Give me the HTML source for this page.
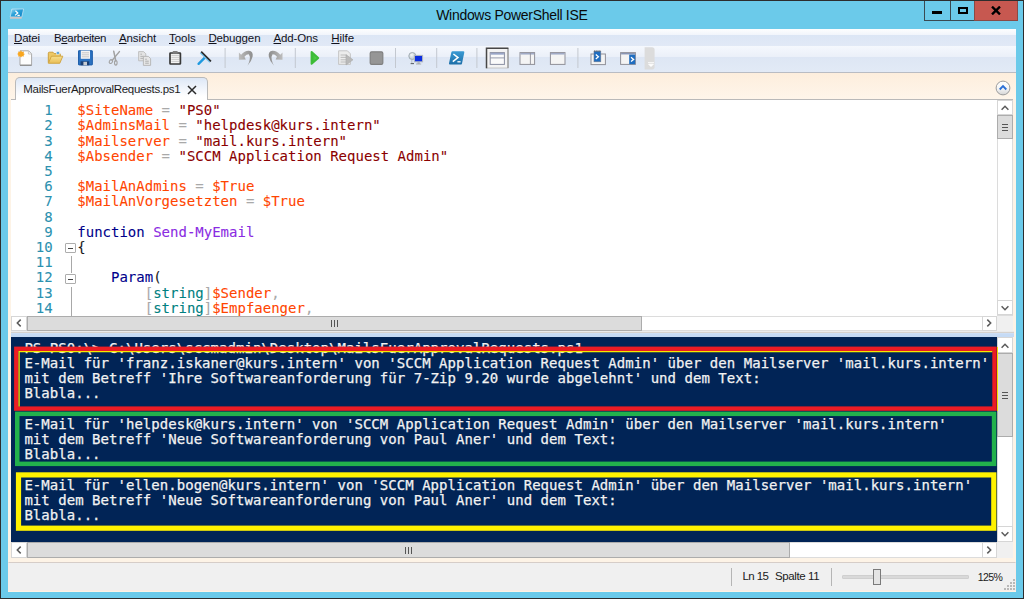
<!DOCTYPE html>
<html lang="de">
<head>
<meta charset="utf-8">
<title>Windows PowerShell ISE</title>
<style>
*{box-sizing:border-box;margin:0;padding:0}
html,body{width:1024px;height:599px;overflow:hidden;background:#6bcaea}
body{position:relative;font-family:"Liberation Sans",sans-serif;font-size:12px;color:#1a1a1a}
.abs{position:absolute}
#frame{left:0;top:0;width:1024px;height:599px;background:#6bcaea;border-top:1px solid #2d2d2d;border-left:1px solid #2d2d2d;border-bottom:1px solid #2d2d2d;border-right:1px solid #2d2d2d}
#title{left:436.2px;top:5px;white-space:nowrap;font-size:14px;line-height:20px;color:#0a0a0a;letter-spacing:-0.3px}
#client{left:7.5px;top:28.5px;width:1008.8px;height:563px;background:#fdf3e6}
/* caption buttons */
.cap{top:1px;height:20px;border:1px solid #3a4a52;border-top:none}
#bmin{left:924px;width:27px;background:#6bcaea}
#bmax{left:950px;width:25px;background:#6bcaea}
#bclose{left:974px;width:44px;background:#c75850;border-color:#8a4a45}
/* menu */
#menubar{left:7.5px;top:28px;width:1008.8px;height:18px;background:linear-gradient(#6bcaea 0,#6bcaea 0.5px,#bfd5e4 0.5px,#eef3f9 1.2px,#fcfdfe 1.4px,#f0f4fb 7.5px,#dce6f5 7.5px,#e1e9f6 18px)}
#toolbar{left:7.5px;top:45.5px;width:1008.8px;height:27.2px;background:linear-gradient(#f5f8fd 0,#ebf0f9 10.5px,#dde6f4 10.5px,#e2eaf6 26.1px,#b9bcc3 26.1px,#b9bcc3 27.2px)}
.mi{top:30.6px;font-size:11.5px;line-height:14px;color:#12121c;white-space:nowrap}
.mi u{text-decoration:underline;text-underline-offset:1px}
.sep{top:48px;width:1px;height:20px;background:#c2c7cf}
/* tabs */
#tabstrip{left:7.5px;top:72.7px;width:1008.8px;height:26.3px;background:linear-gradient(#fdeedd,#fef5ea)}
#tab{left:14.6px;top:77.3px;width:193.6px;height:22.7px;background:linear-gradient(#dde7f6 0,#eef3fb 40%,#fff 85%);border:1px solid #b9b9b9;border-bottom:none;border-radius:5px 5px 0 0}
#tabtxt{left:23.3px;top:82.1px;font-size:11.5px;line-height:14px;letter-spacing:-0.317px;white-space:nowrap;color:#1c1c1c}
/* editor */
#editor{left:11px;top:99px;width:1002px;height:233px;background:#fff;border-top:1px solid #b9b9b9;overflow:hidden}
.mono{font-family:"DejaVu Sans Mono","Liberation Mono",monospace;font-size:14px;white-space:pre;letter-spacing:0}
.ln{position:absolute;left:0;height:16px;line-height:16px;-webkit-text-stroke:0.09px}
.num{position:absolute;left:0;width:41.6px;text-align:right;color:#2b91af}
.code{position:absolute;left:66.3px}
.v{color:#ff4500}.o{color:#a9a9a9}.s{color:#8b0000}.k{color:#00008b}.c{color:#8a2be2}.t{color:#008080}
/* scrollbars */
.sb{background:#fff;border:1px solid #dcdcdc}
.sbtn{background:#fff;border:1px solid #d6d6d6}
.thumb{background:#dcdcdc;border:1px solid #acacac}
/* console */
#console{left:11px;top:337px;width:986px;height:204.5px;background:#012456;overflow:hidden;color:#f2f2f2}
.cl{position:absolute;left:13.4px;height:16px;line-height:16px;letter-spacing:0.034px;-webkit-text-stroke:0.25px #f2f2f2}
.box{position:absolute}
/* status */
#status{left:7.5px;top:561.6px;width:1008.8px;height:29.9px;background:#f0f0f0;border-top:1px solid #d6cdc8;border-left:1px solid #f8ece6;border-right:1px solid #f8ece6;border-bottom:1px solid #f8ece6}
.st{font-size:11.5px;line-height:14px;white-space:nowrap;color:#1a1a1a}
</style>
</head>
<body>
<div id="frame" class="abs"></div>
<div id="title" class="abs">Windows PowerShell ISE</div>

<!-- app icon -->
<svg class="abs" style="left:8px;top:7px" width="18" height="14" viewBox="8 7 18 14">
  <defs><linearGradient id="gapp" x1="0" y1="0" x2="1" y2="1"><stop offset="0" stop-color="#9ddcf4"/><stop offset="0.45" stop-color="#2ba0d8"/><stop offset="1" stop-color="#0b7fc2"/></linearGradient></defs>
  <polygon points="11.8,9 23.6,9 21.8,16.9 10.2,16.9" fill="url(#gapp)" stroke="#cfe9f6" stroke-width="0.7"/>
  <polygon points="10.1,17 21.8,17 21.6,18.7 9.9,18.7" fill="#cdc6c6"/>
  <path d="M15.4 10.8 L17.8 13 L15 15.4 M17.4 15.4 H19.8" stroke="#fff" stroke-width="1.2" fill="none"/>
</svg>

<!-- caption buttons -->
<div id="bmin" class="abs cap"></div>
<div id="bmax" class="abs cap"></div>
<div id="bclose" class="abs cap"></div>
<div class="abs" style="left:932px;top:11px;width:10px;height:3px;background:#000"></div>
<div class="abs" style="left:958px;top:7px;width:10px;height:7px;border:2px solid #000"></div>
<svg class="abs" style="left:991px;top:6px" width="10" height="9" viewBox="0 0 10 9"><path d="M1 0.6 L9 8.4 M9 0.6 L1 8.4" stroke="#000" stroke-width="2.3"/></svg>

<div id="client" class="abs"></div>
<div id="menubar" class="abs"></div>
<div id="toolbar" class="abs"></div>

<div class="abs mi" style="left:14px;letter-spacing:-0.19px"><u>D</u>atei</div>
<div class="abs mi" style="left:54px;letter-spacing:-0.36px">B<u>e</u>arbeiten</div>
<div class="abs mi" style="left:119px;letter-spacing:-0.1px"><u>A</u>nsicht</div>
<div class="abs mi" style="left:169px;letter-spacing:-0.05px"><u>T</u>ools</div>
<div class="abs mi" style="left:208.4px;letter-spacing:-0.135px"><u>D</u>ebuggen</div>
<div class="abs mi" style="left:273.5px;letter-spacing:-0.127px"><u>A</u>dd-Ons</div>
<div class="abs mi" style="left:331.3px;letter-spacing:-0.063px"><u>H</u>ilfe</div>

<!-- toolbar icons -->
<svg class="abs" style="left:7px;top:46px" width="1009" height="26" viewBox="7 46 1009 26">
<defs>
 <linearGradient id="gfold" x1="0" y1="0" x2="0" y2="1"><stop offset="0" stop-color="#f7e08f"/><stop offset="1" stop-color="#e9bd55"/></linearGradient>
 <linearGradient id="gps" x1="0" y1="0" x2="0" y2="1"><stop offset="0" stop-color="#3a9bd4"/><stop offset="1" stop-color="#1d6ea8"/></linearGradient>
 <linearGradient id="ggreen" x1="0" y1="0" x2="1" y2="0"><stop offset="0" stop-color="#36b832"/><stop offset="1" stop-color="#5ed657"/></linearGradient>
</defs>
<!-- new -->
<path d="M20 50.8 H28.6 L31.6 53.8 V65.2 H20 Z" fill="#fdfdfd" stroke="#a9a9a9" stroke-width="1"/>
<path d="M20 65.3 H31.6" stroke="#8d8d8d" stroke-width="1.2"/>
<path d="M28.4 50.8 V54 H31.6" fill="none" stroke="#c4c4c4" stroke-width="0.9"/>
<path d="M21 50.2 L22 52 L24 51.6 L23.6 53.6 L25 54 L23.6 55 L24 56.6 L22 56.2 L21 57.4 L20 56.2 L18 56.6 L18.4 55 L17.2 54 L18.4 53 L18 51.6 L20 52 Z" fill="#f9a61e"/>
<!-- open -->
<path d="M48.3 62.8 V53.2 Q48.3 52.2 49.3 52.2 H53 L54.2 53.6 H59.5 Q60.4 53.6 60.4 54.6 V56" fill="#edc865" stroke="#c99a33" stroke-width="0.9"/>
<rect x="56.3" y="51.6" width="3" height="2.6" fill="#5fa3d8" stroke="#e9f2fa" stroke-width="0.6"/>
<path d="M48.4 63.3 L51.4 56.2 H62.8 L59.8 63.3 Z" fill="url(#gfold)" stroke="#cfa23c" stroke-width="0.9" stroke-linejoin="round"/>
<!-- save -->
<rect x="78" y="50.3" width="14.8" height="15" rx="1" fill="#2b72c2"/>
<rect x="78.5" y="50.8" width="13.8" height="14" rx="0.8" fill="none" stroke="#1e5aa3" stroke-width="0.8"/>
<rect x="80.8" y="50.6" width="9.2" height="8.2" fill="#f4f4f4"/>
<path d="M81.8 52.8 H89 M81.8 54.8 H89 M81.8 56.8 H89" stroke="#bdbdbd" stroke-width="0.8"/>
<rect x="80.6" y="61.3" width="8.6" height="4" fill="#1b3f74"/>
<rect x="83.4" y="61.8" width="3.6" height="3.5" fill="#c8ccd2"/>
<!-- cut (disabled) -->
<g fill="none" stroke="#a2a2a2" stroke-linecap="round">
 <path d="M113.7 51.2 L115.8 61" stroke-width="1.5"/>
 <path d="M119.4 51.6 L112.2 60.4" stroke-width="1.5"/>
 <ellipse cx="110.9" cy="61.6" rx="1.5" ry="2" stroke-width="1.1" transform="rotate(35 110.9 61.6)"/>
 <ellipse cx="115.8" cy="62.8" rx="1.3" ry="2.3" stroke-width="1.1"/>
</g>
<!-- copy (disabled) -->
<path d="M138.6 51.6 H143.6 L145.8 53.8 V60.8 H138.6 Z" fill="#e3e3e3" stroke="#bcbcbc" stroke-width="0.9"/>
<path d="M140.4 54.2 H142 M140.4 56.4 H143.8 M140.4 58.4 H143.8" stroke="#a8a8a8" stroke-width="0.8"/>
<path d="M143.4 56.4 H148.4 L150.6 58.6 V65.4 H143.4 Z" fill="#e6e6e6" stroke="#b4b4b4" stroke-width="0.9"/>
<path d="M145.2 59.2 H146.8 M145.2 61.2 H148.8 M145.2 63.2 H148.8" stroke="#a0a0a0" stroke-width="0.8"/>
<!-- paste -->
<rect x="170" y="53" width="10.4" height="11" rx="0.5" fill="#f4f4f4" stroke="#383838" stroke-width="1.7"/>
<path d="M171.4 55.4 H179 M171.4 57.4 H179 M171.4 59.4 H179 M171.4 61.4 H179" stroke="#c6c6c6" stroke-width="0.9"/>
<rect x="172.8" y="50.9" width="4.8" height="2.8" rx="0.6" fill="#7e7e7e"/>
<!-- clear -->
<path d="M204.8 57.6 L198.6 63.8" stroke="#1f9ae0" stroke-width="2.4" stroke-linecap="round"/>
<path d="M200.4 52.6 L210 62.2" stroke="#7cc6ee" stroke-width="1.6"/>
<path d="M201.2 51.6 L211 61.4" stroke="#2a2a2a" stroke-width="1.5"/>
<!-- separators -->
<g fill="#c3c8d0">
 <rect x="224.6" y="48" width="1" height="20"/><rect x="294.8" y="48" width="1" height="20"/>
 <rect x="395" y="48" width="1" height="20"/><rect x="436.2" y="48" width="1" height="20"/>
 <rect x="476.4" y="48" width="1" height="20"/><rect x="577.4" y="48" width="1" height="20"/>
</g>
<!-- undo (disabled) -->
<linearGradient id="gundo" x1="0" y1="0" x2="1" y2="0"><stop offset="0" stop-color="#bdbdbd"/><stop offset="1" stop-color="#8d8d8d"/></linearGradient>
<path d="M238.9 52.6 L238.9 59.7 L245.8 59.5 L244.4 56.7 Q246.6 54.2 248.8 54.3 Q250.4 56.4 249.6 60 Q249 63 247.4 65.8 Q251.6 61.4 252.6 56.4 Q253.4 51.4 249 50.8 Q245 50.4 241.1 54.8 Z" fill="url(#gundo)"/>
<!-- redo (disabled) -->
<g transform="translate(521.4 0) scale(-1 1)"><path d="M238.9 52.6 L238.9 59.7 L245.8 59.5 L244.4 56.7 Q246.6 54.2 248.8 54.3 Q250.4 56.4 249.6 60 Q249 63 247.4 65.8 Q251.6 61.4 252.6 56.4 Q253.4 51.4 249 50.8 Q245 50.4 241.1 54.8 Z" fill="url(#gundo)"/></g>
<!-- run -->
<path d="M311.6 52 L318.2 57.9 L311.6 63.8 Z" fill="url(#ggreen)" stroke="#3cbc38" stroke-width="2" stroke-linejoin="round"/>
<!-- run selection (disabled) -->
<path d="M338.6 50.8 H347.4 L350.4 53.8 V64.4 H338.6 Z" fill="#ececec" stroke="#c2c2c2" stroke-width="0.9"/>
<path d="M340.6 55 H346 M340.6 57.4 H346 M340.6 59.8 H346 M340.6 62 H346" stroke="#b7b7b7" stroke-width="0.9"/>
<path d="M346 54.6 L353 59.8 L346 65 Z" fill="#b9b9b9" stroke="#a9a9a9" stroke-width="0.6"/>
<!-- stop (disabled) -->
<rect x="370.2" y="51.8" width="12.6" height="12.6" rx="1.4" fill="#969696" stroke="#808080" stroke-width="1.2"/>
<!-- remote -->
<radialGradient id="gglobe" cx="0.4" cy="0.35" r="0.7"><stop offset="0" stop-color="#f4f7f8"/><stop offset="1" stop-color="#b4c2ca"/></radialGradient><circle cx="412.3" cy="56" r="3.5" fill="url(#gglobe)" stroke="#98a4ab" stroke-width="0.9"/>
<path d="M410.6 63.6 H414" stroke="#5d656a" stroke-width="1.1"/>
<path d="M411.8 59.8 V63" stroke="#aeb6ba" stroke-width="0.8"/>
<rect x="414.4" y="55.4" width="8.2" height="6.4" fill="#0b2ee0" stroke="#b4babf" stroke-width="1"/>
<path d="M417.4 62.3 H419.8 V63.6 H421.2 V64.4 H416 V63.6 H417.4 Z" fill="#a9aeb2"/>
<!-- powershell -->
<path d="M452.6 51.2 H463.2 Q464.6 51.2 464.3 52.6 L462 63.4 Q461.7 64.6 460.4 64.6 H450 Q448.7 64.6 449 63.3 L451.3 52.4 Q451.6 51.2 452.6 51.2 Z" fill="url(#gps)"/>
<path d="M453.4 54 L458 57.6 L452.8 61.6" fill="none" stroke="#fff" stroke-width="1.5"/>
<path d="M457.4 61.8 H460.6" stroke="#fff" stroke-width="1.3"/>
<!-- layout 1 (selected) -->
<rect x="486.6" y="48.4" width="21.4" height="19.6" fill="#f3f3f3" stroke="#c4c4c4" stroke-width="1"/>
<path d="M508 48.4 V68" fill="none" stroke="#8a8a8a" stroke-width="1.1"/>
<path d="M486.5 68.2 V48.3 H508.4" fill="none" stroke="#474747" stroke-width="1.5"/>
<rect x="490.2" y="52.6" width="14.2" height="11.8" fill="#fafafa" stroke="#8a8fa2" stroke-width="1"/>
<rect x="490.7" y="53.1" width="13.2" height="1.5" fill="#8f9dc2"/>
<path d="M490.2 57.9 H504.4" stroke="#8a8fa2" stroke-width="0.9"/>
<!-- layout 2 -->
<rect x="520" y="52.6" width="14.6" height="11.8" fill="#f4f4f4" stroke="#8f8f98" stroke-width="1"/>
<rect x="520.5" y="53.1" width="13.6" height="1.4" fill="#98a3c2"/>
<path d="M530.4 53 V64.4" stroke="#8f8f98" stroke-width="0.9"/>
<!-- layout 3 -->
<rect x="550.4" y="52.6" width="14.6" height="11.8" fill="#f4f4f4" stroke="#8f8f98" stroke-width="1"/>
<rect x="550.9" y="53.1" width="13.6" height="1.4" fill="#98a3c2"/>
<!-- script pane popup -->
<rect x="591" y="54" width="14.4" height="10.6" fill="#f4f4f4" stroke="#8f8f98" stroke-width="1"/>
<rect x="594" y="51.2" width="6.8" height="10.6" fill="#1f6dc0" stroke="#6d7a92" stroke-width="0.6"/>
<path d="M595.8 54.6 L598.4 56.8 L595.8 59" fill="none" stroke="#fff" stroke-width="1.3"/>
<path d="M594 51 H601" stroke="#555" stroke-width="0.9" stroke-dasharray="1.4 0.8"/>
<!-- script pane right -->
<rect x="620.6" y="52.6" width="14.8" height="11.8" fill="#f4f4f4" stroke="#8f8f98" stroke-width="1"/>
<rect x="621.1" y="53.1" width="13.8" height="1.3" fill="#7f8cae"/>
<rect x="629.2" y="54.6" width="6" height="9.6" fill="#1f6dc0"/>
<path d="M631 57.2 L633.6 59.4 L631 61.6" fill="none" stroke="#fff" stroke-width="1.3"/>
<!-- overflow -->
<path d="M644.6 47.2 H652 Q654.6 47.2 654.6 49.8 V66.8 Q654.6 69.4 652 69.4 H644.6 Z" fill="#dcdcdc"/>
<path d="M648 62.6 H654 M648.6 64.2 H653.4 L651 66.6 Z" fill="#fff" stroke="#fff" stroke-width="0.8"/>
</svg>


<div id="tabstrip" class="abs"></div>
<!-- collapse button -->
<svg class="abs" style="left:994.5px;top:79.6px" width="16" height="16" viewBox="0 0 16 16"><defs><linearGradient id="gcol" x1="0" y1="0" x2="0" y2="1"><stop offset="0" stop-color="#ffffff"/><stop offset="0.55" stop-color="#f4f4f4"/><stop offset="1" stop-color="#d4d4d4"/></linearGradient></defs><circle cx="8" cy="8" r="6.9" fill="url(#gcol)" stroke="#9c9c9c" stroke-width="1"/><path d="M4.7 9.5 L8 6.2 L11.3 9.5" fill="none" stroke="#2b6fd6" stroke-width="1.9"/></svg>

<div id="editor" class="abs mono">
<div class="ln" style="top:2.2px"><span class="num">1</span><span class="code"><span class="v">$SiteName</span> <span class="o">=</span> <span class="s">"PS0"</span></span></div>
<div class="ln" style="top:17.4px"><span class="num">2</span><span class="code"><span class="v">$AdminsMail</span> <span class="o">=</span> <span class="s">"helpdesk@kurs.intern"</span></span></div>
<div class="ln" style="top:32.6px"><span class="num">3</span><span class="code"><span class="v">$Mailserver</span> <span class="o">=</span> <span class="s">"mail.kurs.intern"</span></span></div>
<div class="ln" style="top:47.8px"><span class="num">4</span><span class="code"><span class="v">$Absender</span> <span class="o">=</span> <span class="s">"SCCM Application Request Admin"</span></span></div>
<div class="ln" style="top:63.0px"><span class="num">5</span><span class="code"></span></div>
<div class="ln" style="top:78.2px"><span class="num">6</span><span class="code"><span class="v">$MailAnAdmins</span> <span class="o">=</span> <span class="v">$True</span></span></div>
<div class="ln" style="top:93.4px"><span class="num">7</span><span class="code"><span class="v">$MailAnVorgesetzten</span> <span class="o">=</span> <span class="v">$True</span></span></div>
<div class="ln" style="top:108.6px"><span class="num">8</span><span class="code"></span></div>
<div class="ln" style="top:123.8px"><span class="num">9</span><span class="code"><span class="k">function</span> <span class="c">Send-MyEmail</span></span></div>
<div class="ln" style="top:139.0px"><span class="num">10</span><span class="code">{</span></div>
<div class="ln" style="top:154.2px"><span class="num">11</span><span class="code"></span></div>
<div class="ln" style="top:169.4px"><span class="num">12</span><span class="code">    <span class="k">Param</span>(</span></div>
<div class="ln" style="top:184.6px"><span class="num">13</span><span class="code">        <span class="o">[</span><span class="t">string</span><span class="o">]</span><span class="v">$Sender</span><span class="o">,</span></span></div>
<div class="ln" style="top:199.8px"><span class="num">14</span><span class="code">        <span class="o">[</span><span class="t">string</span><span class="o">]</span><span class="v">$Empfaenger</span><span class="o">,</span></span></div>
<div style="position:absolute;left:60px;top:155.5px;width:1px;height:17px;background:#a8a8a8"></div>
<div style="position:absolute;left:60px;top:186.5px;width:1px;height:50px;background:#a8a8a8"></div>
<div style="position:absolute;left:54.4px;top:143.3px;width:10.2px;height:10.2px;border:1px solid #adadad;background:#fff;border-radius:1px"></div><div style="position:absolute;left:57px;top:147.8px;width:5px;height:1.2px;background:#444"></div>
<div style="position:absolute;left:54.4px;top:174.3px;width:10.2px;height:10.2px;border:1px solid #adadad;background:#fff;border-radius:1px"></div><div style="position:absolute;left:57px;top:178.8px;width:5px;height:1.2px;background:#444"></div>
</div>
<div id="tab" class="abs"></div>
<div id="tabtxt" class="abs">MailsFuerApprovalRequests.ps1</div>
<svg class="abs" style="left:187px;top:85px" width="10" height="10" viewBox="0 0 10 10"><path d="M1 1 L9 9 M9 1 L1 9" stroke="#2a2a2a" stroke-width="1.5"/></svg>
<div class="abs sb" style="left:997px;top:99.5px;width:15.5px;height:216.0px;"></div>
<div class="abs sbtn" style="left:997px;top:99.5px;width:15.5px;height:15.5px;"></div><svg class="abs" style="left:996.8px;top:99.6px" width="16" height="16" viewBox="-8 -8 16 16"><path d="M-3.4 1.7 L0 -1.7 L3.4 1.7" fill="none" stroke="#5a5a5a" stroke-width="1.5"/></svg>
<div class="abs sbtn" style="left:997px;top:300px;width:15.5px;height:15px;"></div><svg class="abs" style="left:996.8px;top:300px" width="16" height="16" viewBox="-8 -8 16 16"><path d="M-3.4 -1.7 L0 1.7 L3.4 -1.7" fill="none" stroke="#5a5a5a" stroke-width="1.5"/></svg>
<div class="abs thumb" style="left:997px;top:115px;width:15.5px;height:24px;"></div><div class="abs" style="left:1002px;top:124.0px;width:6px;height:7px;background:repeating-linear-gradient(#555 0 1px,transparent 1px 3px)"></div>
<div class="abs sb" style="left:11px;top:315.5px;width:1002px;height:15.5px;background:#f0f0f0;border:none"></div>
<div class="abs sb" style="left:11px;top:315.5px;width:986px;height:15.3px;"></div>
<div class="abs sbtn" style="left:11px;top:315.5px;width:15.5px;height:15.3px;"></div><svg class="abs" style="left:11px;top:315.3px" width="16" height="16" viewBox="-8 -8 16 16"><path d="M1.7 -3.4 L-1.7 0 L1.7 3.4" fill="none" stroke="#5a5a5a" stroke-width="1.5"/></svg>
<div class="abs sbtn" style="left:981.5px;top:315.5px;width:15.0px;height:15.3px;"></div><svg class="abs" style="left:981.3px;top:315.3px" width="16" height="16" viewBox="-8 -8 16 16"><path d="M-1.7 -3.4 L1.7 0 L-1.7 3.4" fill="none" stroke="#5a5a5a" stroke-width="1.5"/></svg>
<div class="abs thumb" style="left:27px;top:315.5px;width:614.5px;height:15.3px;"></div><div class="abs" style="left:331.1px;top:319.9px;width:7px;height:7px;background:repeating-linear-gradient(90deg,#555 0 1px,transparent 1px 3px)"></div>
<div class="abs " style="left:7.5px;top:331px;width:1008.8px;height:6px;background:#fdf3e6"></div>
<div class="abs " style="left:11px;top:331px;width:1002.5px;height:1px;background:#ebebeb"></div>
<div class="abs " style="left:11px;top:332px;width:1002.5px;height:1px;background:#d6d2ce"></div>
<div class="abs " style="left:11px;top:333px;width:1002.5px;height:4px;background:linear-gradient(#d5e3f6 0,#c6dbf5 1px)"></div>
<div id="console" class="abs mono">
<div class="cl" style="top:3.1px">PS PS0:\&gt; C:\Users\sccmadmin\Desktop\MailsFuerApprovalRequests.ps1</div>
<div class="cl" style="top:17.9px">E-Mail für 'franz.iskaner@kurs.intern' von 'SCCM Application Request Admin' über den Mailserver 'mail.kurs.intern'</div>
<div class="cl" style="top:33.1px">mit dem Betreff 'Ihre Softwareanforderung für 7-Zip 9.20 wurde abgelehnt' und dem Text:</div>
<div class="cl" style="top:48.3px">Blabla...</div>
<div class="cl" style="top:78.8px">E-Mail für 'helpdesk@kurs.intern' von 'SCCM Application Request Admin' über den Mailserver 'mail.kurs.intern'</div>
<div class="cl" style="top:93.9px">mit dem Betreff 'Neue Softwareanforderung von Paul Aner' und dem Text:</div>
<div class="cl" style="top:109.1px">Blabla...</div>
<div class="cl" style="top:139.5px">E-Mail für 'ellen.bogen@kurs.intern' von 'SCCM Application Request Admin' über den Mailserver 'mail.kurs.intern'</div>
<div class="cl" style="top:154.8px">mit dem Betreff 'Neue Softwareanforderung von Paul Aner' und dem Text:</div>
<div class="cl" style="top:169.9px">Blabla...</div>
<svg style="position:absolute;left:0;top:0" width="986" height="204.5" viewBox="11 337 986 204.5"><rect x="16.30" y="348.80" width="978.20" height="59.80" fill="none" stroke="#ec1c24" stroke-width="4.4"/><path d="M19.1 406.4 V351.5 H992.3" fill="none" stroke="#f6e800" stroke-width="1.25"/><rect x="17.25" y="413.85" width="976.80" height="50.00" fill="none" stroke="#22b14c" stroke-width="4.5"/><rect x="18.50" y="474.90" width="975.30" height="53.30" fill="none" stroke="#fff200" stroke-width="5.2"/></svg>
</div>
<div class="abs sb" style="left:997px;top:337px;width:16px;height:204.5px;"></div>
<div class="abs sbtn" style="left:997px;top:337px;width:16px;height:16px;"></div><svg class="abs" style="left:996.8px;top:337.5px" width="16" height="16" viewBox="-8 -8 16 16"><path d="M-3.4 1.7 L0 -1.7 L3.4 1.7" fill="none" stroke="#5a5a5a" stroke-width="1.5"/></svg>
<div class="abs sbtn" style="left:997px;top:526px;width:16px;height:15.5px;"></div><svg class="abs" style="left:996.8px;top:525.6px" width="16" height="16" viewBox="-8 -8 16 16"><path d="M-3.4 -1.7 L0 1.7 L3.4 -1.7" fill="none" stroke="#5a5a5a" stroke-width="1.5"/></svg>
<div class="abs thumb" style="left:997px;top:353px;width:16px;height:84.3px;"></div><div class="abs" style="left:1002px;top:392.0px;width:6px;height:7px;background:repeating-linear-gradient(#555 0 1px,transparent 1px 3px)"></div>
<div class="abs sb" style="left:11px;top:541.5px;width:1002px;height:16.0px;background:#f0f0f0;border:none"></div>
<div class="abs sb" style="left:11px;top:541.5px;width:986px;height:16.0px;"></div>
<div class="abs sbtn" style="left:11px;top:541.5px;width:16px;height:16.0px;"></div><svg class="abs" style="left:11px;top:541.6px" width="16" height="16" viewBox="-8 -8 16 16"><path d="M1.7 -3.4 L-1.7 0 L1.7 3.4" fill="none" stroke="#5a5a5a" stroke-width="1.5"/></svg>
<div class="abs sbtn" style="left:981.5px;top:541.5px;width:15.5px;height:16.0px;"></div><svg class="abs" style="left:981.3px;top:541.6px" width="16" height="16" viewBox="-8 -8 16 16"><path d="M-1.7 -3.4 L1.7 0 L-1.7 3.4" fill="none" stroke="#5a5a5a" stroke-width="1.5"/></svg>
<div class="abs thumb" style="left:27px;top:541.5px;width:762.5px;height:16.0px;"></div><div class="abs" style="left:405.4px;top:546.6px;width:7px;height:7px;background:repeating-linear-gradient(90deg,#555 0 1px,transparent 1px 3px)"></div>
<div class="abs " style="left:996.5px;top:347px;width:1.4px;height:63.5px;background:#f0e000"></div>

<div id="status" class="abs"></div>
<div class="abs" style="left:731px;top:568px;width:1px;height:18px;background:#b5b5b5"></div>
<div class="abs st" style="left:742.6px;top:569px;letter-spacing:-0.64px">Ln 15</div>
<div class="abs st" style="left:775px;top:569px;letter-spacing:-0.39px">Spalte 11</div>
<div class="abs" style="left:831px;top:568px;width:1px;height:18px;background:#b5b5b5"></div>
<div class="abs" style="left:842px;top:575px;width:127px;height:4px;background:#d9d9d9;border:1px solid #cfcfcf;border-radius:1px"></div>
<div class="abs" style="left:873px;top:569px;width:8px;height:16px;background:#e4e4e4;border:1px solid #7a7a7a"></div>
<div class="abs st" style="left:977.8px;top:569.6px;font-size:10.5px;letter-spacing:-0.6px">125%</div>
<svg class="abs" style="left:1004px;top:578px" width="12" height="12" viewBox="0 0 12 12" fill="#b8b8b8"><rect x="9" y="1" width="2" height="2"/><rect x="6" y="4" width="2" height="2"/><rect x="9" y="4" width="2" height="2"/><rect x="3" y="7" width="2" height="2"/><rect x="6" y="7" width="2" height="2"/><rect x="9" y="7" width="2" height="2"/><rect x="0" y="10" width="2" height="2"/><rect x="3" y="10" width="2" height="2"/><rect x="6" y="10" width="2" height="2"/><rect x="9" y="10" width="2" height="2"/></svg>
</body>
</html>
